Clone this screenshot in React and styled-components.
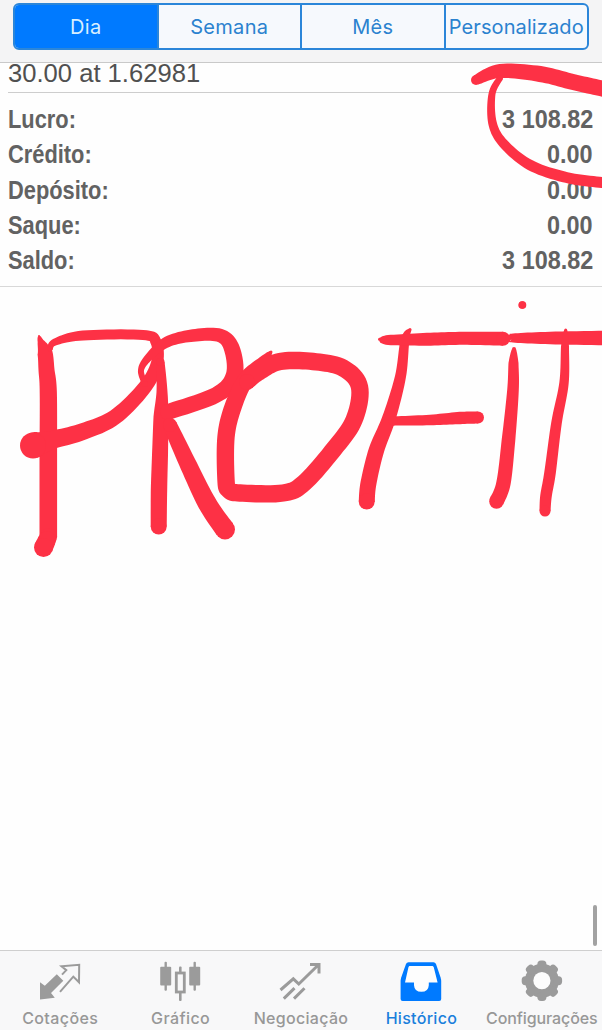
import React from "react";
import styled, { createGlobalStyle } from "styled-components";

const summary = [
  { label: "Lucro:", value: "3 108.82" },
  { label: "Crédito:", value: "0.00" },
  { label: "Depósito:", value: "0.00" },
  { label: "Saque:", value: "0.00" },
  { label: "Saldo:", value: "3 108.82" },
];

const periods = [
  { name: "Dia", active: true, spacing: "0.4px" },
  { name: "Semana", spacing: "0.3px" },
  { name: "Mês", spacing: "0.2px" },
  { name: "Personalizado", spacing: "0.1px" },
];

// every stroke is a list of [x, y, radius] pen samples
const strokes = [
  // circle around the profit value
  [[476, 80, 5], [500, 71, 7], [540, 74, 8], [573, 82, 8], [602, 88.5, 8], [614, 91, 8]],
  [[500, 78, 3], [492, 94, 3.5], [492.5, 123, 4.3], [503.5, 143.5, 4.8], [530, 165, 5.3], [566.5, 177.5, 5.5], [602, 182.5, 5.5], [614, 183, 5.5]],
  // P
  [[39, 336, 1], [40.5, 341, 3], [45, 353, 7.6], [46.5, 370, 8], [48.3, 393, 8.6], [48.3, 460, 8.8], [48.3, 537, 8.8]],
  [[47, 540, 9], [43.5, 547.5, 9.5]],
  [[50, 349, 2.5], [55, 342, 3.5], [83, 335.5, 5], [143, 335, 5], [156, 342, 5.5], [157, 363, 6], [145, 387, 7], [115, 417, 7.8], [83, 431.5, 8.5], [52, 440, 9], [38, 444, 12.5], [33, 445.5, 13]],
  // R
  [[160.5, 362, 4], [162, 392, 5.5], [161, 417, 7.5], [160, 455, 8], [159, 490, 8.2], [158.7, 526.5, 8]],
  [[145, 384, 3], [141, 370, 3], [149, 357, 4], [167, 342, 5.5], [193, 335.5, 6.2], [220, 335.5, 6.8], [232, 349, 8], [234, 376, 8.5], [216, 395, 8], [168, 412, 8]],
  [[170, 425, 7], [187, 462, 8.5], [207, 503, 9.5], [225, 529.5, 10]],
  // O
  [[271, 352, 1.5], [263, 361, 5], [246, 379, 8], [233, 407, 8.7], [226, 437, 8.7], [226, 480, 8.7], [229, 490, 8.7], [240, 493, 8.7], [283, 493, 8.7], [304, 483, 8.7], [334, 449, 8.7], [354, 420, 8.7], [359.5, 387, 8.7], [343, 368, 8.7], [313, 361.5, 8.7], [280, 361.5, 8.7], [259, 372, 8.5], [247, 382, 8]],
  // F
  [[410, 329.5, 1.5], [405, 340, 4.5], [400.5, 376.5, 5.5], [389, 418, 6.8], [376.5, 450, 7.8], [368.5, 483, 8], [366.7, 501.5, 8]],
  [[379.5, 339.3, 1.5], [388, 340, 5], [427, 339.3, 6.5], [463, 338.3, 6.5], [503, 338.7, 7]],
  [[393, 421, 4.5], [430, 420, 5.3], [460, 418, 6.2], [478, 417.5, 6]],
  // i
  [[522.2, 305, 3.8], [522.5, 305, 3.8]],
  [[514, 349, 2], [513.5, 363, 5], [513, 390, 5.8], [508.5, 440, 6.8], [503.5, 483, 7.2], [496.5, 501.5, 7.3]],
  // T
  [[508.5, 337.7, 3], [513, 338, 4.5], [550, 338, 6.3], [614, 338, 7.5]],
  [[565.7, 330, 1.5], [565, 346.7, 4], [564, 383, 4.7], [556.5, 423, 5.3], [550, 473, 5.8], [546, 496, 5.8], [545, 511, 5.5]],
];

const STEPS = 10;

const spline = (a, b, c, d, t) =>
  0.5 *
  (2 * b +
    (c - a) * t +
    (2 * a - 5 * b + 4 * c - d) * t * t +
    (3 * b - a - 3 * c + d) * t * t * t);

const smooth = (points) => {
  const result = [];
  for (let i = 0; i < points.length - 1; i++) {
    const before = points[i - 1] || points[i];
    const after = points[i + 2] || points[i + 1];
    for (let s = 0; s < STEPS; s++) {
      const t = s / STEPS;
      result.push([
        spline(before[0], points[i][0], points[i + 1][0], after[0], t),
        spline(before[1], points[i][1], points[i + 1][1], after[1], t),
        points[i][2] + (points[i + 1][2] - points[i][2]) * t,
      ]);
    }
  }
  result.push(points[points.length - 1]);
  return result;
};

// both edges of the ink, joined into one closed shape
const outline = (path) => {
  const left = [];
  const right = [];
  path.forEach(([x, y, r], i) => {
    const from = path[Math.max(i - 1, 0)];
    const to = path[Math.min(i + 1, path.length - 1)];
    const dx = to[0] - from[0];
    const dy = to[1] - from[1];
    const length = Math.hypot(dx, dy) || 1;
    const nx = (-dy / length) * r;
    const ny = (dx / length) * r;
    left.push(`${(x + nx).toFixed(2)},${(y + ny).toFixed(2)}`);
    right.unshift(`${(x - nx).toFixed(2)},${(y - ny).toFixed(2)}`);
  });
  return [...left, ...right].join(" ");
};

const PenStroke = ({ points }) => {
  const path = smooth(points);
  const start = path[0];
  const end = path[path.length - 1];
  return (
    <g>
      <polygon points={outline(path)} />
      <circle cx={start[0]} cy={start[1]} r={start[2]} />
      <circle cx={end[0]} cy={end[1]} r={end[2]} />
    </g>
  );
};

const QuotesIcon = () => (
  <Icon viewBox="0 0 46 44">
    <path
      fill="currentColor"
      d="M3 24.3 7.8 27.8 19.8 16.2 26.3 22.8 14 35 17.8 39.8 3 41.5Z"
    />
    <path
      fill="none"
      stroke="currentColor"
      strokeWidth="2"
      d="M23 33.8 36.3 18.6 42 24.3 42.2 6.8 24.5 8.2 29.3 12.2 25 16.6"
    />
  </Icon>
);

const ChartIcon = () => (
  <Icon viewBox="0 0 46 44">
    <g fill="currentColor">
      <rect x="2.2" y="8.8" width="11" height="18.6" rx="1" />
      <rect x="6.5" y="3.8" width="2.4" height="29" rx="1" />
      <rect x="31.2" y="8.8" width="11" height="18.6" rx="1" />
      <rect x="35.5" y="3.8" width="2.4" height="29" rx="1" />
      <rect x="21" y="8.5" width="2.6" height="6" rx="1" />
      <rect x="21" y="34" width="2.6" height="9" rx="1" />
    </g>
    <rect
      x="18.3"
      y="15"
      width="8"
      height="19"
      fill="none"
      stroke="currentColor"
      strokeWidth="2.8"
    />
  </Icon>
);

const TradeIcon = () => (
  <Icon viewBox="0 0 46 44">
    <path
      fill="none"
      stroke="currentColor"
      strokeWidth="3"
      d="M2.5 32 15.3 20.8 20.8 26 41 6.2M32 6.5H41V15.5M5.8 40.6 16.5 30.2M16 40.6 26.5 30.2"
    />
  </Icon>
);

const HistoryIcon = () => (
  <Icon viewBox="0 0 46 44">
    <path
      fill="currentColor"
      d="M10.5 4.3H35.5Q37.3 4.3 38 6L42.6 19.5Q43.2 21.5 43.2 23V41Q43.2 43 41.2 43H4.6Q2.6 43 2.6 41V23Q2.6 21.5 3.2 19.5L8 6Q8.7 4.3 10.5 4.3Z"
    />
    <path
      fill="#fdfdfd"
      d="M11.3 8H34.7L35.7 9 39.6 24.6H30.8V27.2Q30.4 33.8 23.4 33.8 16.4 33.8 16 27.2V24.6H7L10.5 9Z"
    />
  </Icon>
);

const SettingsIcon = () => (
  <Icon viewBox="0 0 46 44">
    <circle cx="22.9" cy="22.7" r="17" fill="currentColor" />
    {[0, 45, 90, 135, 180, 225, 270, 315].map((angle) => (
      <rect
        key={angle}
        x="18.4"
        y="2.5"
        width="9"
        height="9"
        rx="3.6"
        fill="currentColor"
        transform={`rotate(${angle} 22.9 22.7)`}
      />
    ))}
    <circle cx="22.9" cy="22.7" r="8.6" fill="#fdfdfd" />
  </Icon>
);

const tabs = [
  { name: "Cotações", icon: QuotesIcon, spacing: "0.4px" },
  { name: "Gráfico", icon: ChartIcon, spacing: "0.4px" },
  { name: "Negociação", icon: TradeIcon, spacing: "0.3px" },
  { name: "Histórico", icon: HistoryIcon, active: true, spacing: "0.3px" },
  { name: "Configurações", icon: SettingsIcon, spacing: "-0.1px" },
];

export default function App() {
  return (
    <Screen>
      <GlobalStyle />
      <Header>
        <Segments>
          {periods.map((period) => (
            <Segment key={period.name} $active={period.active} $spacing={period.spacing}>
              {period.name}
            </Segment>
          ))}
        </Segments>
      </Header>
      <Content>
        <Deal>30.00 at 1.62981</Deal>
        <Summary>
          {summary.map((row) => (
            <Row key={row.label}>
              <Label>{row.label}</Label>
              <Value>{row.value}</Value>
            </Row>
          ))}
        </Summary>
      </Content>
      <TabBar>
        {tabs.map(({ name, icon: TabIcon, active, spacing }) => (
          <Tab key={name} $active={active}>
            <TabIcon />
            <TabLabel $active={active} $spacing={spacing}>
              {name}
            </TabLabel>
          </Tab>
        ))}
      </TabBar>
      <ScrollThumb />
      <Ink viewBox="0 0 602 1030">
        {strokes.map((points, i) => (
          <PenStroke points={points} key={i} />
        ))}
      </Ink>
    </Screen>
  );
}

const GlobalStyle = createGlobalStyle`
  body {
    margin: 0;
    background-color: #fefefe;
  }
`;

const Screen = styled.div`
  position: relative;
  display: flex;
  flex-direction: column;
  width: 602px;
  height: 1030px;
  overflow: hidden;
  background-color: #fefefe;
  font-family: Inter, "Liberation Sans", sans-serif;
`;

const Header = styled.header`
  box-sizing: border-box;
  flex: none;
  height: 63px;
  padding: 3px 13px 0;
  border-bottom: 1px solid #c9c9c9;
  background-color: #f4f4f5;
`;

const Segments = styled.div`
  box-sizing: border-box;
  display: flex;
  height: 47px;
  border: 2px solid #2b86d9;
  border-radius: 6px;
  overflow: hidden;
  background-color: #f6f9fd;
`;

const Segment = styled.div`
  box-sizing: border-box;
  display: flex;
  flex: 1 1 0;
  min-width: 0;
  align-items: center;
  justify-content: center;
  padding-top: 1px;
  font-size: 20px;
  letter-spacing: ${(props) => props.$spacing};
  white-space: nowrap;
  color: ${(props) => (props.$active ? "#d8efff" : "#2b82cf")};
  background-color: ${(props) => (props.$active ? "#007aff" : "transparent")};

  & + & {
    border-left: 2px solid #2b86d9;
  }

  &:nth-child(2) {
    border-left-color: transparent;
  }
`;

const Content = styled.main`
  flex: 1;
`;

const Deal = styled.div`
  box-sizing: border-box;
  height: 30px;
  margin-left: 8px;
  border-bottom: 1px solid #cdcdcd;
  font-family: "Liberation Sans", Arial, sans-serif;
  font-size: 25.6px;
  line-height: 20px;
  color: #505050;
`;

const Summary = styled.div`
  box-sizing: border-box;
  height: 194px;
  padding: 9px 9px 0 8px;
  border-bottom: 1px solid #d8d8d8;
`;

const Row = styled.div`
  display: flex;
  justify-content: space-between;
  height: 35.3px;
  font-family: "Liberation Sans", Arial, sans-serif;
  font-size: 26px;
  font-weight: bold;
  line-height: 35.3px;
  color: #626262;
`;

const Label = styled.span`
  transform: scaleX(0.84);
  transform-origin: left;
`;

const Value = styled.span`
  transform: scaleX(0.9);
  transform-origin: right;
`;

const TabBar = styled.nav`
  box-sizing: border-box;
  display: flex;
  flex: none;
  height: 80px;
  border-top: 1px solid #cfcfcf;
  background-color: #f8f8f9;
`;

const Tab = styled.div`
  display: flex;
  flex: 1 1 0;
  min-width: 0;
  flex-direction: column;
  align-items: center;
  padding-top: 7px;
  color: ${(props) => (props.$active ? "#007aff" : "#9b9b9b")};
`;

const Icon = styled.svg`
  flex: none;
  width: 46px;
  height: 44px;
`;

const TabLabel = styled.span`
  margin-top: 6px;
  font-size: 16px;
  font-weight: 500;
  line-height: 20px;
  letter-spacing: ${(props) => props.$spacing};
  white-space: nowrap;
  color: ${(props) => (props.$active ? "#1a7fdc" : "#979797")};
`;

const ScrollThumb = styled.div`
  position: absolute;
  top: 905px;
  right: 5px;
  width: 4px;
  height: 41px;
  border-radius: 2px;
  background-color: #a2a2a2;
`;

const Ink = styled.svg`
  position: absolute;
  top: 0;
  left: 0;
  width: 602px;
  height: 1030px;
  fill: #fd3145;
  pointer-events: none;
`;
